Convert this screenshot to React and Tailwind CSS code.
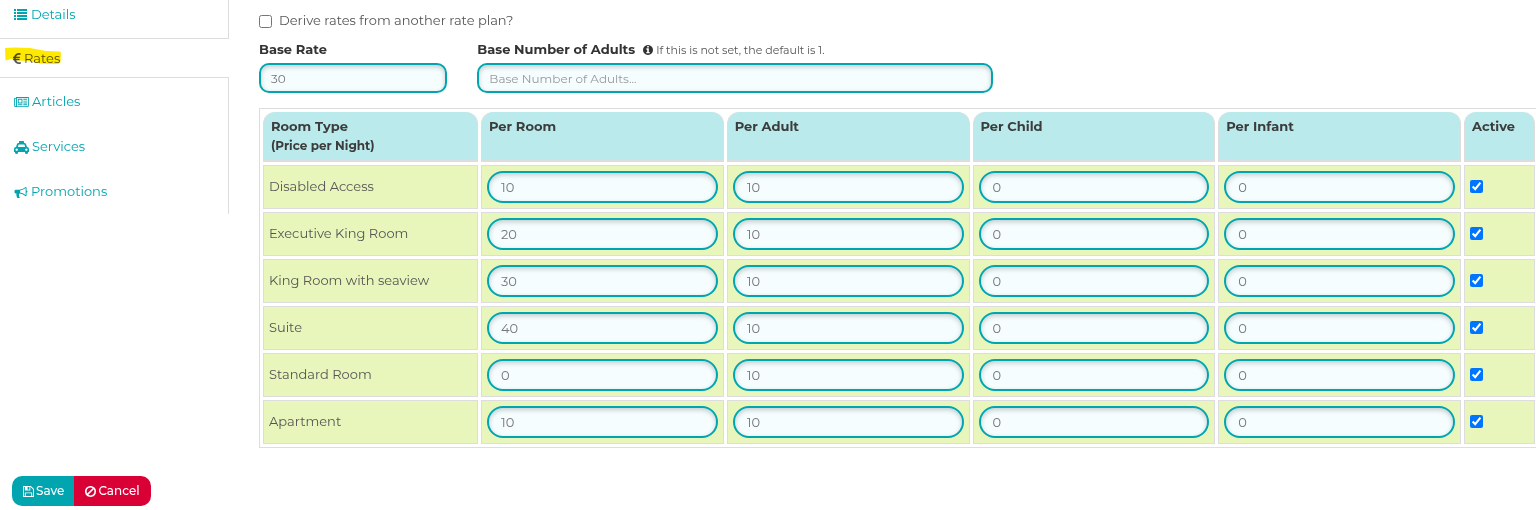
import { useState } from "react";

function Glyph({ viewBox = "0 0 1792 1792", className, children }) {
  return (
    <svg viewBox={viewBox} fill="currentColor" aria-hidden="true" className={`shrink-0 ${className}`}>
      {children}
    </svg>
  );
}

const ListIcon = () => (
  <Glyph viewBox="0 0 13 11" className="h-[11px] w-[13px]">
    {[0, 3, 6, 9].map((y) => (
      <g key={y}>
        <rect x="0" y={y} width="2" height="2" />
        <rect x="3" y={y} width="10" height="2" />
      </g>
    ))}
  </Glyph>
);

const EuroIcon = () => (
  <Glyph viewBox="384 128 1024 1408" className="h-[11px] w-2">
    <path d="M1360 1307l35 159q3 12-3 22.500t-17 14.500l-5 1q-4 2-10.500 3.500t-16 4.500-21.500 5.500-25.500 5-30 5-33.500 4.500-36.500 3-38.500 1q-234 0-409-130.500t-238-351.500h-95q-13 0-22.500-9.500t-9.500-22.500v-113q0-13 9.500-22.500t22.500-9.500h66q-2-57 1-105h-67q-14 0-23-9t-9-23v-114q0-14 9-23t23-9h98q67-210 243.500-338t400.500-128q102 0 194 23 11 3 20 15 6 11 3 24l-43 159q-3 13-14 19.500t-24 2.500l-4-1q-4-1-11.500-2.500l-17.500-3.500-22.500-3.500-26-3-29-2.500-29.500-1q-126 0-226 64t-150 176h468q16 0 25 12 10 12 7 26l-24 114q-5 26-32 26h-488q-3 37 0 105h459q15 0 25 12 9 12 6 27l-24 112q-2 11-11 18.500t-20 7.500h-387q48 117 149.500 185.500t228.500 68.500q18 0 36-1.500t33.500-3.500 29.500-4.500 24.500-5 18.500-4.500l12-3 5-2q13-5 26 2 12 7 15 21z" />
  </Glyph>
);

const NewsIcon = () => (
  <Glyph viewBox="0 128 2048 1536" className="h-[11px] w-[15px]">
    <path d="M1024 512h-384v384h384v-384zm128 640v128h-640v-128h640zm0-768v640h-640v-640h640zm640 768v128h-512v-128h512zm0-256v128h-512v-128h512zm0-256v128h-512v-128h512zm0-256v128h-512v-128h512zm-1536 960v-960h-128v960q0 26 19 45t45 19 45-19 19-45zm1664 0v-1088h-1536v1088q0 33-11 64h1483q26 0 45-19t19-45zm128-1216v1216q0 80-56 136t-136 56h-1664q-80 0-136-56t-56-136v-1088h256v-128h1792z" />
  </Glyph>
);

const TaxiIcon = () => (
  <Glyph viewBox="0 0 15 13" className="h-[13px] w-[15px]">
    <path
      fillRule="evenodd"
      d="M5.500 0h4q.5 0 .5.5v1.500h.4q1.400 0 1.800 1.400l.8 2.700q2 .1 2 2v2.600q0 .3-.3.3h-.7v.5a1.500 1.500 0 0 1-3 0v-.5h-7v.5a1.500 1.500 0 0 1-3 0v-.5h-.7q-.3 0-.3-.3v-2.600q0-1.900 2-2l.8-2.700q.4-1.400 1.800-1.400h.4v-1.500q0-.5.5-.5zM3.900 6h7.200l-.6-2.200q-.1-.3-.4-.3h-5.200q-.3 0-.4.3zM2.700 7.400a1.200 1.200 0 1 0 .01 0zM12.300 7.400a1.200 1.200 0 1 0 .01 0z"
    />
  </Glyph>
);

const HornIcon = () => (
  <Glyph className="h-[13px] w-[14px]">
    <path d="M1664 640q53 0 90.5 37.5t37.5 90.5-37.5 90.5-90.5 37.5v384q0 52-38 90t-90 38q-417-347-812-380-58 19-91 66t-31 100.5 40 92.5q-20 33-23 65.5t6 58 33.5 55 48 50 61.5 50.5q-29 58-111.5 83t-168.5 11.5-132-55.5q-7-23-29.5-87.5t-32-94.5-23-89-15-101 3.5-98.5 22-110.5h-122q-66 0-113-47t-47-113v-192q0-66 47-113t113-47h480q435 0 896-384 52 0 90 38t38 90v384zm-128 604v-954q-394 302-768 343v270q377 42 768 341z" />
  </Glyph>
);

const InfoIcon = () => (
  <Glyph viewBox="128 128 1536 1536" className="size-[10px] text-[#333]">
    <path d="M1152 1376v-160q0-14-9-23t-23-9h-96v-512q0-14-9-23t-23-9h-320q-14 0-23 9t-9 23v160q0 14 9 23t23 9h96v320h-96q-14 0-23 9t-9 23v160q0 14 9 23t23 9h448q14 0 23-9t9-23zm-128-896v-160q0-14-9-23t-23-9h-192q-14 0-23 9t-9 23v160q0 14 9 23t23 9h192q14 0 23-9t9-23zm640 416q0 209-103 385.5t-279.5 279.5-385.5 103-385.5-103-279.5-279.5-103-385.5 103-385.5 279.5-279.5 385.5-103 385.5 103 279.5 279.5 103 385.5z" />
  </Glyph>
);

const SaveIcon = () => (
  <Glyph viewBox="128 128 1536 1536" className="size-[11px]">
    <path d="M512 1536h768v-384h-768v384zm896 0h128v-896q0-14-10-38.5t-20-34.5l-281-281q-10-10-34-20t-39-10v416q0 40-28 68t-68 28h-576q-40 0-68-28t-28-68v-416h-128v1280h128v-416q0-40 28-68t68-28h832q40 0 68 28t28 68v416zm-384-928v-320q0-13-9.5-22.5t-22.5-9.5h-192q-13 0-22.5 9.5t-9.5 22.5v320q0 13 9.5 22.5t22.5 9.5h192q13 0 22.5-9.5t9.5-22.5zm640 32v928q0 40-28 68t-68 28h-1344q-40 0-68-28t-28-68v-1344q0-40 28-68t68-28h928q40 0 88 20t76 48l280 280q28 28 48 76t20 88z" />
  </Glyph>
);

const BanIcon = () => (
  <Glyph viewBox="128 128 1536 1536" className="size-[11px]">
    <path d="M1440 893q0-161-87-295l-754 753q137 89 297 89 111 0 211.5-43.5t173.5-116.5 116-174.5 43-212.5zm-999 299l755-754q-135-91-300-91-148 0-273 73t-198 199-73 274q0 162 89 299zm1223-299q0 157-61 300t-163.5 246-245 164-298.5 61-298.5-61-245-164-163.5-246-61-300 61-299.5 163.5-245.5 245-164 298.5-61 298.5 61 245 164 163.5 245.5 61 299.5z" />
  </Glyph>
);

const COLUMNS = ["Per Room", "Per Adult", "Per Child", "Per Infant"];

const ROOMS = [
  ["Disabled Access", [10, 10, 0, 0]],
  ["Executive King Room", [20, 10, 0, 0]],
  ["King Room with seaview", [30, 10, 0, 0]],
  ["Suite", [40, 10, 0, 0]],
  ["Standard Room", [0, 10, 0, 0]],
  ["Apartment", [10, 10, 0, 0]],
];

const FIELD =
  "block w-full border-2 border-[#00a5b0] bg-[#f5fdff] text-[#777] shadow-[inset_0_2px_5px_rgba(0,0,0,0.2)] outline-none placeholder:text-[#999]";
const HEAD =
  "rounded-t-[12px] border border-t-0 border-b-2 border-[#ddd] bg-[#baeaeb] px-[7px] pt-[5px] text-left align-top font-bold text-[#3c3c3c] leading-[19px]";
const CELL = "border border-[#ddd] bg-[#e8f6bb] p-[5px]";

function SideLink({ icon, children }) {
  return (
    <a href="#" className="flex h-[45px] items-center gap-[3px] pt-[3px] pl-[14px] text-[#00a5b0]">
      {icon}
      {children}
    </a>
  );
}

function Sidebar() {
  return (
    <nav className="w-[229px] shrink-0">
      <div className="flex h-[39px] flex-col justify-end border-r border-b border-[#ddd]">
        <a href="#" className="flex grow items-start gap-1 pt-1 pl-[14px] leading-5 text-[#00a5b0]">
          <span className="flex h-5 items-center"><ListIcon /></span>
          Details
        </a>
      </div>
      <a href="#" aria-current="page" className="relative flex h-[38px] items-center gap-[3px] pt-px pl-[13px] text-[#555]">
        <EuroIcon />
        Rates
        <svg viewBox="0 0 58 18" aria-hidden="true" className="absolute top-[8px] left-[4px] h-[18px] w-[58px] mix-blend-multiply">
          <path fill="#ffe900" d="M1 1 L11 0.5 L26 1 L42 4 L56 4.5 L57 6 L56.500 15.500 L54 17 L46 17 L36 16.500 L24 14 L14 13.500 L7 12 L1.500 13.500 Z" />
        </svg>
      </a>
      <div className="border-t border-r border-[#ddd] pb-px">
        <SideLink icon={<NewsIcon />}>Articles</SideLink>
        <SideLink icon={<TaxiIcon />}>Services</SideLink>
        <SideLink icon={<HornIcon />}>Promotions</SideLink>
      </div>
    </nav>
  );
}

function RoomRow({ name, rates }) {
  const [values, setValues] = useState(rates);
  const [active, setActive] = useState(true);
  return (
    <tr>
      <td className={CELL}>{name}</td>
      {COLUMNS.map((column, i) => (
        <td key={column} className={CELL}>
          <input
            type="text"
            aria-label={`${name} ${column}`}
            value={values[i]}
            onChange={(e) => setValues(values.map((v, j) => (j === i ? e.target.value : v)))}
            className={`${FIELD} h-8 rounded-full px-3`}
          />
        </td>
      ))}
      <td className={CELL}>
        <input
          type="checkbox"
          aria-label={`${name} active`}
          checked={active}
          onChange={(e) => setActive(e.target.checked)}
          className="mb-0.5 block size-[13px]"
        />
      </td>
    </tr>
  );
}

export default function App() {
  return (
    <div className="overflow-hidden bg-white font-['Montserrat','Inter',sans-serif] text-[13px] text-[#555]">
      <div className="flex">
        <Sidebar />
        <main className="-mr-[3px] ml-[30px] min-w-0 grow pt-[11px]">
          <div className="flex h-5 items-center gap-[7px]">
            <input id="derive" type="checkbox" className="size-[13px]" />
            <label htmlFor="derive">Derive rates from another rate plan?</label>
          </div>
          <div className="mt-[9px] grid grid-cols-12 gap-[30px]">
            <div className="col-span-2">
              <label htmlFor="base-rate" className="flex h-5 items-center font-bold text-[#333]">Base Rate</label>
              <input id="base-rate" type="text" defaultValue="30" className={`${FIELD} mt-[3px] h-[30px] rounded-[10px] px-[10px] text-xs`} />
            </div>
            <div className="col-span-5">
              <div className="flex h-5 items-center">
                <label htmlFor="base-adults" className="font-bold text-[#333]">Base Number of Adults</label>
                <span className="ml-2 flex items-center gap-[3px] text-[11px]">
                  <InfoIcon />
                  If this is not set, the default is 1.
                </span>
              </div>
              <input id="base-adults" type="text" placeholder="Base Number of Adults..." className={`${FIELD} mt-[3px] h-[30px] rounded-[10px] px-[10px] text-xs`} />
            </div>
          </div>
          <table className="mt-[15px] w-full table-fixed border-separate border-spacing-[3px] border border-[#ddd]">
            <colgroup>
              <col className="w-[215px]" />
              <col />
              <col />
              <col />
              <col />
              <col className="w-[71px]" />
            </colgroup>
            <thead>
              <tr className="h-[50px]">
                <th scope="col" className={HEAD}>
                  Room Type
                  <span className="block text-xs leading-[19px]">(Price per Night)</span>
                </th>
                {COLUMNS.map((column) => (
                  <th key={column} scope="col" className={HEAD}>{column}</th>
                ))}
                <th scope="col" className={HEAD}>Active</th>
              </tr>
            </thead>
            <tbody>
              {ROOMS.map(([name, rates]) => (
                <RoomRow key={name} name={name} rates={rates} />
              ))}
            </tbody>
          </table>
        </main>
      </div>
      <div className="mt-7 mb-1 ml-3 flex h-[30px] text-xs font-medium text-white">
        <button type="button" className="flex items-center gap-[2px] rounded-l-[10px] bg-[#00a5b0] pr-[10px] pl-[11px]">
          <SaveIcon />
          Save
        </button>
        <button type="button" className="flex items-center gap-[2px] rounded-r-[10px] bg-[#d90036] px-[11px]">
          <BanIcon />
          Cancel
        </button>
      </div>
    </div>
  );
}
